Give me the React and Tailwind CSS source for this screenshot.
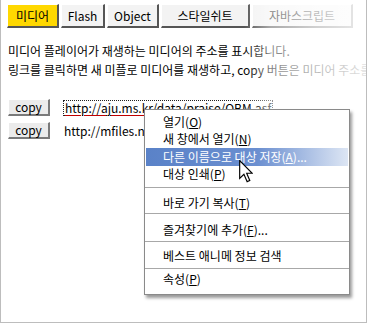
import React from 'react';

const tabs = [
  { label: '미디어', w: 'w-[52px]', active: true },
  { label: 'Flash', w: 'w-[44px]' },
  { label: 'Object', w: 'w-[52px]' },
  { label: '스타일쉬트', w: 'w-[89px]' },
  { label: '자바스크립트', w: 'w-[101px]' },
];

const CopyButton = () => (
  <button
    type="button"
    className="w-[42px] h-[17px] flex items-center justify-center bg-[#ebebeb] border-t border-l border-t-white border-l-white border-r-2 border-b-2 border-r-[#7a7a7a] border-b-[#7a7a7a] text-[12px] leading-none"
  >
    copy
  </button>
);

const Cursor = () => (
  <svg width="14" height="23" viewBox="0 0 12 20" className="absolute left-[238px] top-[160px]">
    <path d="M0.5 0.5 L0.5 16 L4.2 12.4 L7 18.8 L9.3 17.8 L6.6 11.5 L11.4 11.5 Z" fill="white" stroke="black" strokeWidth="1" strokeLinejoin="miter" />
  </svg>
);

export default function App() {
  return (
    <div className="relative w-[367px] h-[323px] overflow-hidden bg-white border-l border-r border-b border-[#bdbdbd] text-[12px] text-black font-['Noto_Sans_CJK_KR','Noto_Sans',sans-serif]">
      {/* tabs */}
      <div className="flex gap-[2px] pl-[6px] pt-[4px]">
        {tabs.map((t) => (
          <div
            key={t.label}
            className={`${t.w} h-[24px] flex items-center justify-center text-[12px] border-t border-l border-t-white border-l-white border-r-2 border-b-2 border-r-[#555] border-b-[#555] ${t.active ? 'bg-[#ffd800]' : 'bg-[#f3f3f3]'}`}
          >
            {t.label}
          </div>
        ))}
      </div>

      {/* description */}
      <div className="pl-[7px] mt-[13px] leading-[19px] whitespace-nowrap">
        <p>미디어 플레이어가 재생하는 미디어의 주소를 표시합니다.</p>
        <p>링크를 클릭하면 새 미플로 미디어를 재생하고, copy 버튼은 미디어 주소를 복사합니다.</p>
      </div>

      {/* url rows */}
      <div className="pl-[7px] mt-[20px] flex flex-col gap-[6px] whitespace-nowrap">
        <div className="flex items-center gap-[13px]">
          <CopyButton />
          <span className="border border-dotted border-[#222] px-px leading-[14px] underline decoration-[#c00000] underline-offset-2">
            http://aju.ms.kr/data/praise/OBM.asf
          </span>
        </div>
        <div className="flex items-center gap-[14px]">
          <CopyButton />
          <span className="leading-[14px]">http://mfiles.naver.net/data/media/ani/ep2/a2/</span>
        </div>
      </div>

      {/* right fade */}
      <div className="absolute top-0 right-0 bottom-0 w-[122px] bg-[linear-gradient(to_right,rgba(255,255,255,0)_0%,rgba(255,255,255,0.5)_22%,rgba(255,255,255,0.72)_58%,rgba(255,255,255,0.88)_100%)]" />

      {/* context menu */}
      <div className="absolute left-[143px] top-[109px] w-[206px] h-[186px] bg-white border border-[#8a8a8a] shadow-[2px_3px_3px_rgba(0,0,0,0.4)] whitespace-nowrap">
        <div className="pt-[3px]">
          <div className="h-[17px] flex items-center pl-[18px]">열기(<u>O</u>)</div>
          <div className="h-[17px] flex items-center pl-[18px]">새 창에서 열기(<u>N</u>)</div>
          <div className="h-[18px] mt-px mx-px flex items-center pl-[17px] text-white bg-[linear-gradient(to_right,#5a82c8_0%,#6b8fd0_55%,#dde6f4_100%)]">
            다른 이름으로 대상 저장(<u>A</u>)...
          </div>
          <div className="h-[16px] flex items-center pl-[18px]">대상 인쇄(<u>P</u>)</div>
        </div>
        <div className="h-px bg-[#a8a8a8] mt-[5px]" />
        <div className="h-[25px] pt-[5px] flex items-center pl-[18px]">바로 가기 복사(<u>T</u>)</div>
        <div className="h-px bg-[#a8a8a8]" />
        <div className="h-[27px] pt-[5px] flex items-center pl-[18px]">즐겨찾기에 추가(<u>F</u>)...</div>
        <div className="h-px bg-[#a8a8a8]" />
        <div className="h-[26px] pt-px flex items-center pl-[18px]">베스트 애니메 정보 검색</div>
        <div className="h-px bg-[#a8a8a8]" />
        <div className="h-[24px] pb-[4px] flex items-center pl-[18px]">속성(<u>P</u>)</div>
      </div>

      <Cursor />
    </div>
  );
}
